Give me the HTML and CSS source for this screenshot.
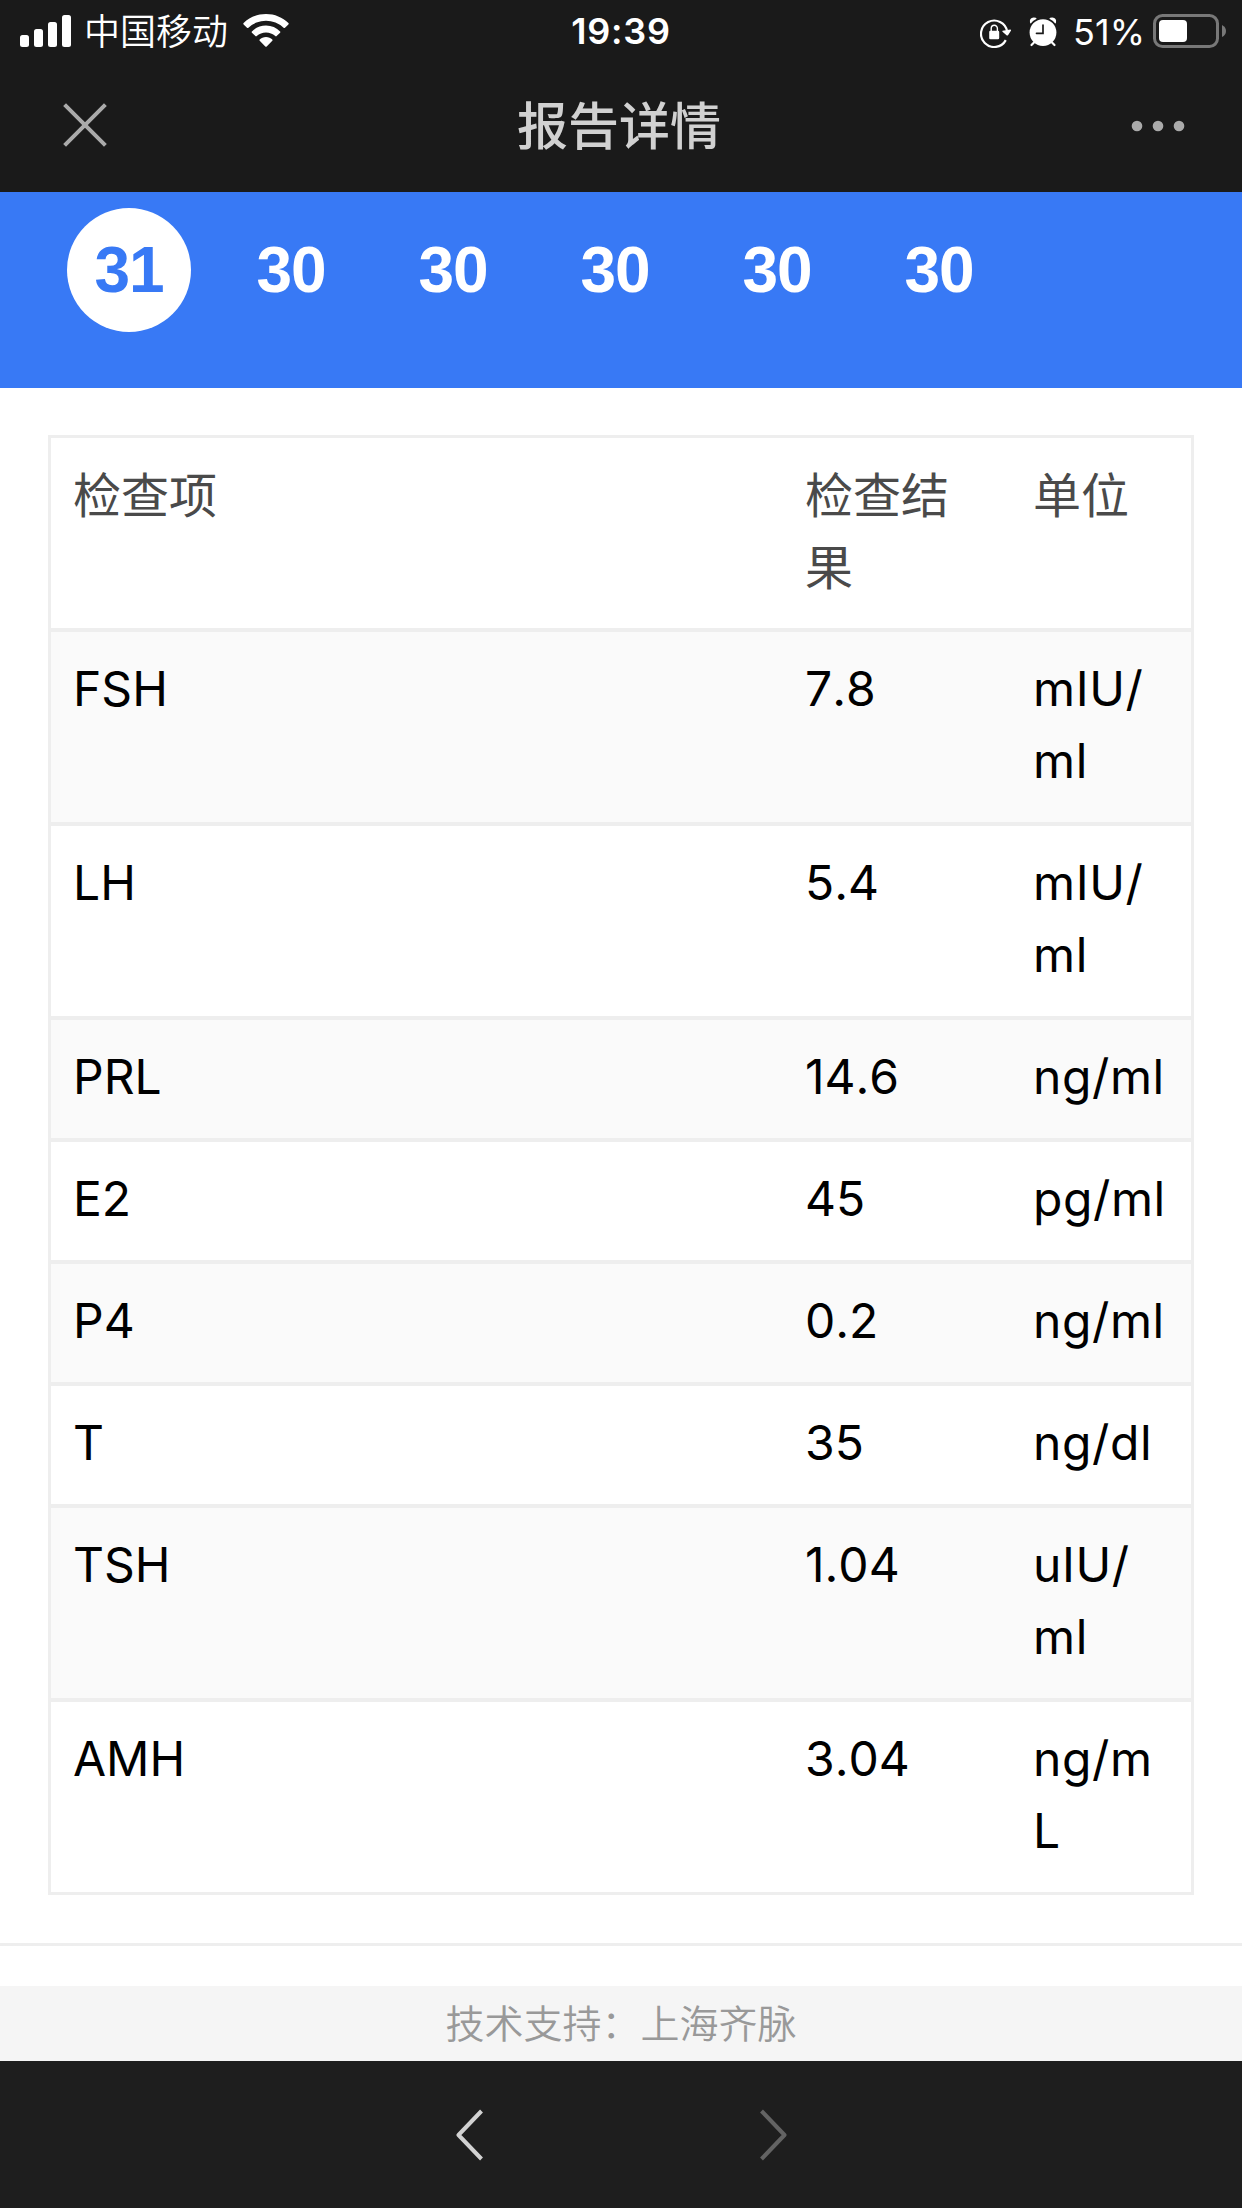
FILE: index.html
```html
<!DOCTYPE html>
<html lang="zh-CN">
<head>
  <meta charset="UTF-8">
  <meta name="viewport" content="width=device-width, initial-scale=1.0">
  <title>报告详情</title>
  <link rel="stylesheet" href="styles.css">
</head>
<body>
  <header class="top">
    <!-- Status bar -->
    <div class="status-bar">
      <div class="status-left">
        <svg class="signal" width="51" height="32" viewBox="0 0 51 32" fill="#fff">
          <rect x="0" y="20" width="9" height="12" rx="2.5"/>
          <rect x="14" y="14" width="9" height="18" rx="2.5"/>
          <rect x="28" y="7" width="9" height="25" rx="2.5"/>
          <rect x="42" y="0" width="9" height="32" rx="2.5"/>
        </svg>
        <span class="carrier">中国移动</span>
        <svg class="wifi" width="46" height="34" viewBox="0 0 46 34" fill="#fff">
          <path d="M23 0C14.300 0 6.400 3.400 0.600 9Q0 9.700 0.600 10.400L4 13.800Q4.700 14.400 5.400 13.800A25.500 25.500 0 0 1 40.600 13.800Q41.300 14.400 42 13.800L45.400 10.400Q46 9.700 45.400 9C39.600 3.400 31.700 0 23 0Z"/>
          <path d="M23 11.600C17.500 11.600 12.500 13.800 8.900 17.400Q8.300 18 8.900 18.700L12.400 22.100Q13 22.700 13.700 22.100A13.600 13.600 0 0 1 32.300 22.100Q33 22.700 33.600 22.100L37.100 18.700Q37.700 18 37.100 17.400C33.500 13.800 28.500 11.600 23 11.600Z"/>
          <path d="M23 23C20.500 23 18.300 24 16.700 25.500Q16 26.200 16.700 26.800L22.300 32.500Q23 33.200 23.700 32.500L29.300 26.800Q30 26.200 29.300 25.500C27.700 24 25.500 23 23 23Z"/>
        </svg>
      </div>
      <span class="clock">19:39</span>
      <div class="status-right">
        <svg class="rotation-lock" width="32" height="30" viewBox="0 0 32 30">
          <path d="M25.800 22.100A13.200 13.200 0 1 1 27.200 13.500" fill="none" stroke="#fff" stroke-width="2.200"/>
          <path d="M22.600 12.700L30.400 11.500Q31.500 11.700 30.900 12.800L28 17.200Q27.200 18 26.500 17.200L22.500 13.800Q22 13 22.600 12.700Z" fill="#fff"/>
          <rect x="9.200" y="12.800" width="10" height="8.500" rx="1.300" fill="#fff"/>
          <path d="M11.200 13.500V10.500A3.100 3.300 0 0 1 17.400 10.500V13.500" fill="none" stroke="#fff" stroke-width="1.400"/>
        </svg>
        <svg class="alarm" width="28" height="30" viewBox="0 0 28 30">
          <g fill="#fff">
            <path d="M1 5.600Q0.200 1 4.600 0.600Q7.200 0.500 7.700 1.700Q4 3.400 1.800 6.500Q1.200 6.400 1 5.600Z"/>
            <path d="M27 5.600Q27.800 1 23.400 0.600Q20.800 0.500 20.300 1.700Q24 3.400 26.200 6.500Q26.800 6.400 27 5.600Z"/>
            <circle cx="14" cy="15.600" r="13.400"/>
          </g>
          <path d="M5 25.500L2.500 28M23 25.500L25.500 28" stroke="#fff" stroke-width="2.200" stroke-linecap="round"/>
          <path d="M14 8V16.300H7.500" fill="none" stroke="#1a1a1a" stroke-width="1.700" stroke-linecap="round"/>
        </svg>
        <span class="percent">51%</span>
        <svg class="battery" width="74" height="34" viewBox="0 0 74 34">
          <rect x="1.500" y="1.500" width="63" height="31" rx="8" fill="none" stroke="#787878" stroke-width="3"/>
          <rect x="6" y="6" width="28" height="22" rx="4" fill="#fff"/>
          <path d="M69 11Q73 13 73 17Q73 21 69 23Z" fill="#787878"/>
        </svg>
      </div>
    </div>

    <!-- Title bar -->
    <div class="title-bar">
      <svg class="close" width="44" height="44" viewBox="0 0 44 44">
        <path d="M1.600 1.600L42.400 42.400M42.400 1.600L1.600 42.400" stroke="#aaa" stroke-width="4"/>
      </svg>
      <h1 class="title">报告详情</h1>
      <svg class="more" width="54" height="12" viewBox="0 0 54 12" fill="#aaa">
        <circle cx="6" cy="6" r="5.300"/>
        <circle cx="27" cy="6" r="5.300"/>
        <circle cx="48" cy="6" r="5.300"/>
      </svg>
    </div>
  </header>

  <!-- Day picker -->
  <nav class="days">
    <span class="day active">31</span>
    <span class="day">30</span>
    <span class="day">30</span>
    <span class="day">30</span>
    <span class="day">30</span>
    <span class="day">30</span>
  </nav>

  <main class="report">
    <div class="report-table">
      <div class="row head">
        <div>检查项</div>
        <div>检查结果</div>
        <div>单位</div>
      </div>
      <div class="row">
        <div>FSH</div>
        <div>7.8</div>
        <div class="unit">mIU/<br>ml</div>
      </div>
      <div class="row">
        <div>LH</div>
        <div>5.4</div>
        <div class="unit">mIU/<br>ml</div>
      </div>
      <div class="row">
        <div>PRL</div>
        <div>14.6</div>
        <div class="unit">ng/ml</div>
      </div>
      <div class="row">
        <div>E2</div>
        <div>45</div>
        <div class="unit">pg/ml</div>
      </div>
      <div class="row">
        <div>P4</div>
        <div>0.2</div>
        <div class="unit">ng/ml</div>
      </div>
      <div class="row">
        <div>T</div>
        <div>35</div>
        <div class="unit">ng/dl</div>
      </div>
      <div class="row">
        <div>TSH</div>
        <div>1.04</div>
        <div class="unit">uIU/<br>ml</div>
      </div>
      <div class="row">
        <div>AMH</div>
        <div>3.04</div>
        <div class="unit">ng/m<br>L</div>
      </div>
    </div>
  </main>

  <footer class="support">技术支持：上海齐脉</footer>

  <!-- Browser navigation -->
  <div class="toolbar">
    <svg width="28" height="52" viewBox="0 0 28 52" fill="none" stroke="#d2d2d2" stroke-width="4" stroke-linejoin="round">
      <path d="M25.500 2L2.500 26L25.500 50"/>
    </svg>
    <svg width="28" height="52" viewBox="0 0 28 52" fill="none" stroke="#636363" stroke-width="4" stroke-linejoin="round">
      <path d="M2.500 2L25.500 26L2.500 50"/>
    </svg>
  </div>
</body>
</html>
```

FILE: styles.css
```css
* {
  box-sizing: border-box;
}

body {
  margin: 0;
  background: #fff;
  color: #000;
  font-family: Inter, "Noto Sans CJK SC", sans-serif;
  font-size: 48px;
}

svg {
  display: block;
  flex: none;
}

/* Top bars */
.top {
  height: 192px;
  background: #1a1a1a;
  color: #fff;
}

.status-bar {
  display: grid;
  grid-template-columns: 1fr auto 1fr;
  height: 60px;
  padding: 0 15px 0 20px;
  font-size: 36px;
  line-height: 60px;
}

.status-left,
.status-right {
  display: flex;
  align-items: center;
}

.status-right {
  justify-content: flex-end;
}

.carrier {
  margin: 2px 0 0 13px;
  font-weight: 350;
}

.wifi {
  margin-left: 15px;
}

.clock {
  margin-left: -5px;
  padding-top: 1px;
  font-weight: 580;
  letter-spacing: 0.8px;
}

.rotation-lock {
  margin-top: 3px;
}

.alarm {
  margin: 2px 0 0 17px;
}

.percent {
  margin: 2px 8px 0 16px;
  font-weight: 380;
}

.title-bar {
  display: flex;
  justify-content: space-between;
  align-items: center;
  height: 132px;
  padding: 0 57px 0 63px;
}

.close {
  margin-bottom: 2px;
}

.title {
  margin: 0;
  padding-top: 2px;
  color: #d1d1d1;
  font-size: 51px;
  font-weight: 500;
  line-height: 72px;
}

/* Day picker */
.days {
  display: flex;
  gap: 38px;
  height: 196px;
  padding: 16px 67px;
  background: #3879f5;
}

.day {
  width: 124px;
  height: 124px;
  border-radius: 50%;
  color: #fff;
  font-family: "Liberation Sans", Arial, sans-serif;
  font-size: 64px;
  font-weight: bold;
  letter-spacing: -1px;
  line-height: 124px;
  text-align: center;
}

.day.active {
  background: #fff;
  color: #3879f5;
}

/* Report table */
.report {
  padding: 47px 48px 48px;
  border-bottom: 3px solid #eee;
}

.report-table {
  border: 3px solid #eee;
}

.row {
  display: grid;
  grid-template-columns: 732px 228px 180px;
  border-bottom: 4px solid #eee;
  font-kerning: none;
  font-weight: 380;
  line-height: 72px;
}

.row > div {
  padding: 21px 22px 25px;
}

.row:nth-child(even) {
  background: #fafafa;
}

.row:last-child {
  border-bottom: none;
}

.row.head {
  color: #4a4a4a;
}

.row.head > div {
  padding: 22px 22px 24px;
}

.row > .unit {
  padding-right: 0;
  letter-spacing: 0.6px;
}

/* Footer */
.support {
  height: 75px;
  margin-top: 40px;
  background: #f5f5f5;
  color: #999;
  font-size: 39px;
  font-weight: 350;
  line-height: 75px;
  text-align: center;
}

.toolbar {
  display: flex;
  justify-content: center;
  align-items: center;
  gap: 275px;
  height: 147px;
  background: #1e1e1e;
}
```
